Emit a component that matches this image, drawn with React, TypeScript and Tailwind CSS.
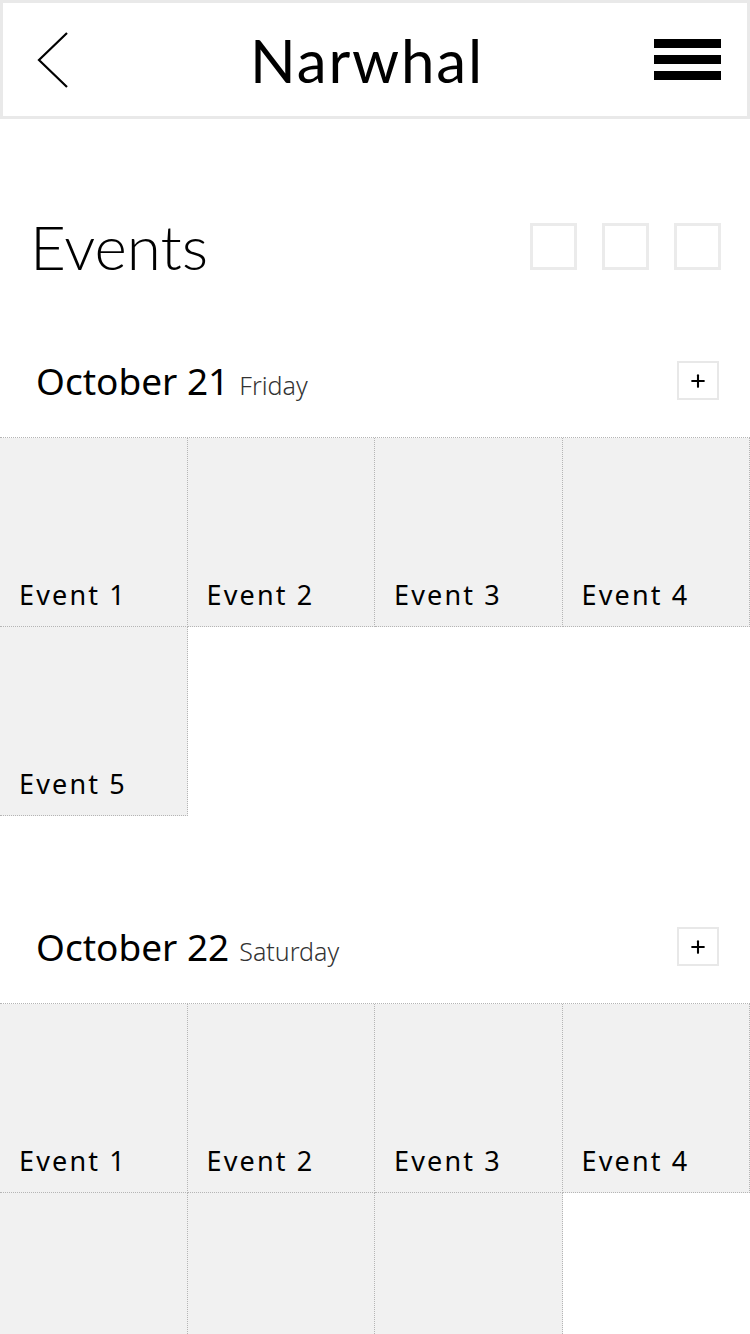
import { Plus } from "lucide-react";

const days = [
    { date: "October 21", weekday: "Friday", events: ["Event 1", "Event 2", "Event 3", "Event 4", "Event 5"] },
    { date: "October 22", weekday: "Saturday", events: ["Event 1", "Event 2", "Event 3", "Event 4", "", "", ""] },
];

export default function App() {
    return (
        <div className="min-h-screen w-[750px] bg-white" style={{ fontFamily: "'Noto Sans', 'Open Sans', sans-serif" }}>
            {/* header */}
            <div className="flex h-[119px] items-center justify-between border-[3px] border-[#e9e9e9] pl-[33px] pr-[26px]">
                <svg width="34" height="58" viewBox="0 0 34 58" fill="none" stroke="black" strokeWidth="2.2">
                    <path d="M31 2 L3 29 L31 56" />
                </svg>
                <h1
                    className="ml-[10px] text-[60px] font-normal leading-none tracking-[0.03em] text-black"
                    style={{ fontFamily: "Lato, 'Noto Sans', sans-serif" }}
                >
                    Narwhal
                </h1>
                <div className="flex w-[67px] flex-col gap-[7px]">
                    <span className="block h-[9px] bg-black" />
                    <span className="block h-[9px] bg-black" />
                    <span className="block h-[9px] bg-black" />
                </div>
            </div>

            {/* title */}
            <div className="mt-[96px] flex items-center justify-between pl-[30px] pr-[29px]">
                <h2 className="text-[62px] font-light leading-none text-black" style={{ fontFamily: "Lato, sans-serif" }}>
                    Events
                </h2>
                <div className="flex gap-[25px]">
                    <span className="block h-[47px] w-[47px] border-[3px] border-[#ebebeb]" />
                    <span className="block h-[47px] w-[47px] border-[3px] border-[#ebebeb]" />
                    <span className="block h-[47px] w-[47px] border-[3px] border-[#ebebeb]" />
                </div>
            </div>

            {days.map((day, i) => (
                <div key={day.date} className={i === 0 ? "mt-[84px]" : "mt-[111px]"}>
                    <div className="flex items-center justify-between pl-[36px] pr-[31px]">
                        <p className="leading-none">
                            <span className="text-[37px] text-black">{day.date}</span>
                            <span className="ml-[10px] text-[25px] font-light text-[#333]">{day.weekday}</span>
                        </p>
                        <button className="flex h-[39px] w-[42px] items-center justify-center border-2 border-[#e8e8e8]">
                            <Plus className="h-[20px] w-[20px]" strokeWidth={2.5} />
                        </button>
                    </div>
                    <div className="mt-[37px] grid grid-cols-4 border-t border-dotted border-[#b5b5b5]">
                        {day.events.map((ev, j) => (
                            <div
                                key={j}
                                className="flex h-[189px] items-end border-r border-b border-dotted border-[#b5b5b5] bg-[#f1f1f1] pb-[18px] pl-[19px]"
                            >
                                <span className="text-[27px] leading-none tracking-[0.08em] text-black">{ev}</span>
                            </div>
                        ))}
                    </div>
                </div>
            ))}
        </div>
    );
}
